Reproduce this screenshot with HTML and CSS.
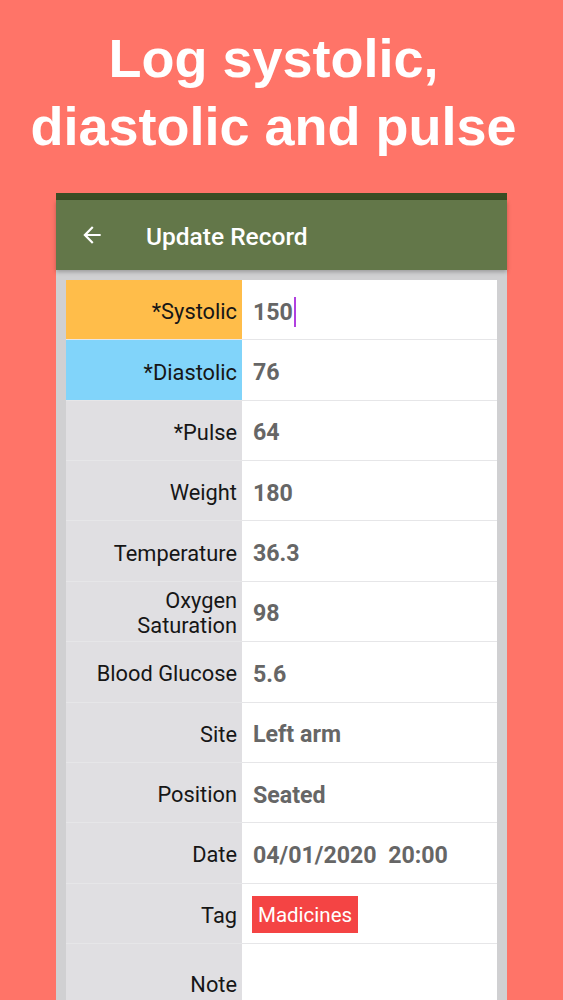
FILE: index.html
```html
<!DOCTYPE html>
<html>
<head>
<meta charset="utf-8">
<link rel="stylesheet" href="styles.css">
</head>
<body>
<div class="page">
  <h1 class="headline">Log systolic,<br>diastolic and pulse</h1>
  <div class="phone">
    <div class="statusbar"></div>
    <div class="toolbar">
      <svg class="back" viewBox="0 0 24 24" width="26" height="26"><path fill="#fff" d="M20 11H7.83l5.59-5.59L12 4l-8 8 8 8 1.41-1.41L7.83 13H20v-2z"/></svg>
      <span class="title">Update Record</span>
    </div>
    <div class="body">
      <div class="card">
        <div class="row"><div class="label sys">*Systolic</div><div class="value">150<span class="cursor"></span></div></div>
        <div class="row"><div class="label dia">*Diastolic</div><div class="value">76</div></div>
        <div class="row"><div class="label">*Pulse</div><div class="value">64</div></div>
        <div class="row"><div class="label">Weight</div><div class="value">180</div></div>
        <div class="row"><div class="label">Temperature</div><div class="value">36.3</div></div>
        <div class="row"><div class="label two">Oxygen<br>Saturation</div><div class="value">98</div></div>
        <div class="row"><div class="label">Blood Glucose</div><div class="value">5.6</div></div>
        <div class="row"><div class="label">Site</div><div class="value">Left arm</div></div>
        <div class="row"><div class="label">Position</div><div class="value">Seated</div></div>
        <div class="row"><div class="label">Date</div><div class="value">04/01/2020&nbsp;&nbsp;20:00</div></div>
        <div class="row"><div class="label">Tag</div><div class="value tagcell"><span class="tag">Madicines</span></div></div>
        <div class="row note"><div class="label">Note</div><div class="value"></div></div>
      </div>
    </div>
  </div>
</div>
</body>
</html>
```
FILE: styles.css
```css
html, body {
  margin: 0;
  padding: 0;
  height: 1000px;
  overflow: hidden;
  background: #ff7468;
}
.page {
  width: 563px;
  height: 1000px;
  overflow: hidden;
}
.headline {
  margin: 0;
  padding-top: 24px;
  padding-right: 16px;
  height: 166px;
  box-sizing: border-box;
  text-align: center;
  color: #fff;
  font-family: "Liberation Sans", Arial, sans-serif;
  font-weight: bold;
  font-size: 54px;
  line-height: 68px;
}
.phone {
  margin-top: 27px;
  margin-left: 56px;
  width: 451px;
  background: #d0d0d2;
}
.statusbar {
  height: 7px;
  background: #3b4d24;
}
.toolbar {
  height: 70px;
  background: #637749;
  display: flex;
  align-items: center;
  box-shadow: 0 2px 4px rgba(0,0,0,0.25);
  position: relative;
}
.back {
  margin-left: 23px;
}
.title {
  margin-left: 41px;
  padding-top: 2px;
  color: #fff;
  font-family: Roboto, sans-serif;
  font-weight: 500;
  font-size: 24.5px;
}
.body {
  padding: 10px 10px 0 10px;
}
.card {
  background: #fff;
}
.row {
  display: flex;
  height: 60.36px;
  box-sizing: border-box;
  border-bottom: 1px solid #e6e6e8;
}
.label {
  width: 176px;
  flex: none;
  background: #e0dfe2;
  display: flex;
  align-items: center;
  justify-content: flex-end;
  text-align: right;
  padding-right: 5px;
  padding-top: 4px;
  box-sizing: border-box;
  font-family: Roboto, sans-serif;
  font-size: 21.8px;
  color: #161616;
}
.label.two {
  line-height: 25px;
}
.label.sys { background: #ffbd4a; }
.label.dia { background: #81d4fa; }
.value {
  flex: 1;
  display: flex;
  align-items: center;
  padding-left: 11px;
  padding-top: 4px;
  font-family: Roboto, sans-serif;
  font-weight: bold;
  font-size: 23.2px;
  color: #666;
}
.value.tagcell {
  padding-top: 2px;
}
.cursor {
  display: inline-block;
  width: 2px;
  height: 30px;
  background: #b040e0;
  margin-left: 1px;
}
.tag {
  background: #f44444;
  color: #fff;
  font-weight: normal;
  font-size: 20.5px;
  line-height: 24px;
  padding: 7px 6px 6px 6px;
  margin-left: -1px;
}
.note {
  height: 78px;
  border-bottom: none;
}
```
